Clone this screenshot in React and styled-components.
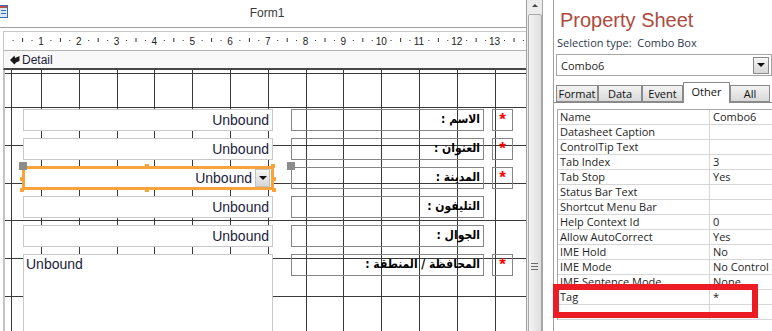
import React from "react";
import styled, { createGlobalStyle } from "styled-components";

const GlobalStyle = createGlobalStyle`
  html, body { margin: 0; padding: 0; background: #fff; }
  body { font-family: "Liberation Sans", Arial, sans-serif; }
  * { box-sizing: border-box; }
`;

const Screen = styled.div`
  position: relative;
  display: flex;
  width: 772px;
  height: 331px;
  overflow: hidden;
  background: #fff;
`;

/* ---------- form designer ---------- */

const DesignPane = styled.div`
  flex: none;
  width: 527px;
  display: flex;
  flex-direction: column;
  border-right: 1px solid #a0a0a0;
`;

const TitleBar = styled.div`
  flex: none;
  height: 28px;
  display: flex;
  align-items: flex-start;
  border-bottom: 1px solid #a0a0a0;
  overflow: hidden;
`;

const TitleIcon = styled.svg`
  flex: none;
  margin: 5px 0 0 -7px;
`;

const TitleText = styled.div`
  flex: 1;
  text-align: center;
  font-size: 12px;
  line-height: 27px;
  color: #3a3a3a;
`;

const RulerBox = styled.div`
  flex: none;
  height: 20px;
  margin: 3px 0 0 3px;
  border-top: 1px solid #c8c8c8;
  border-bottom: 1px solid #b4b4b4;
  border-left: 1px solid #c8c8c8;
  overflow: hidden;
`;

const SectionBar = styled.div`
  flex: none;
  height: 19px;
  margin-left: 3px;
  padding-left: 6px;
  display: flex;
  align-items: center;
  gap: 2px;
  background: #f8f8f8;
  border-left: 1px solid #c8c8c8;
  border-bottom: 2px solid #474747;
  font-size: 12px;
  color: #1e1e3c;
`;

const Canvas = styled.div`
  flex: 1;
  margin-left: 3px;
  padding: 39px 0 0 18px;
  display: flex;
  flex-direction: column;
  gap: 7px;
  border-left: 2px solid #c4c4c4;
  background-image:
    repeating-linear-gradient(to right, #3a3a3a 0 1px, transparent 1px 37.8px),
    repeating-linear-gradient(to bottom, #3a3a3a 0 1px, transparent 1px 37.8px);
  background-position: 36px 0, 0 37px;
`;

const Row = styled.div`
  display: flex;
  align-items: flex-start;
  height: 22px;
`;

const TextBox = styled.div`
  position: relative;
  flex: none;
  width: 250px;
  height: ${(p) => (p.$memo ? "120px" : "22px")};
  display: flex;
  align-items: ${(p) => (p.$memo ? "flex-start" : "center")};
  justify-content: ${(p) => (p.$memo ? "flex-start" : "flex-end")};
  padding: ${(p) => (p.$memo ? "1px 0 0 2px" : "0 3px 0 0")};
  background: #fff;
  border: 1px solid #c8c8c8;
  font-size: 14px;
  color: #1c1c3c;
  ${(p) =>
    p.$selected &&
    `
    padding-right: 2px;
    outline: 3px solid #f8a33c;
    outline-offset: -2px;
  `}
`;

const DropButton = styled.div`
  flex: none;
  width: 15px;
  height: 18px;
  margin-left: 3px;
  display: flex;
  align-items: center;
  justify-content: center;
  background: linear-gradient(#f6f6f6, #d6d6d6);
  border: 1px solid #c2c2c2;
`;

const Arrow = styled.span`
  width: 0;
  height: 0;
  border-left: 4px solid transparent;
  border-right: 4px solid transparent;
  border-top: 4px solid #111;
`;

const Handle = styled.span`
  position: absolute;
  left: ${(p) => p.$x}px;
  top: ${(p) => p.$y}px;
  width: ${(p) => (p.$move ? 8 : 4)}px;
  height: ${(p) => (p.$move ? 8 : 4)}px;
  background: ${(p) => (p.$move ? "#8c8c8c" : "#f8a33c")};
`;

const LabelBox = styled.div`
  position: relative;
  flex: none;
  width: 193px;
  height: 22px;
  margin-left: 18px;
  padding: 1px 3px 0 0;
  border: 1px solid #858585;
  direction: rtl;
  text-align: right;
  font-family: "DejaVu Sans Condensed", "DejaVu Sans", sans-serif;
  font-stretch: condensed;
  font-weight: bold;
  font-size: 12px;
  line-height: 16px;
  color: #000;
  white-space: nowrap;
`;

const StarBox = styled.div`
  flex: none;
  width: 21px;
  height: 22px;
  margin-left: 8px;
  display: flex;
  justify-content: center;
  padding-top: 2px;
  border: 1px solid #858585;
  font-weight: bold;
  font-size: 17px;
  line-height: 16px;
  color: #ff0000;
`;

/* ---------- scrollbar ---------- */

const ScrollBar = styled.div`
  flex: none;
  width: 16px;
  display: flex;
  flex-direction: column;
  align-items: center;
  background: #ececec;
  border-right: 1px solid #a6a6a6;
`;

const ScrollArrow = styled.span`
  margin-top: 4px;
  width: 0;
  height: 0;
  border-left: 3px solid transparent;
  border-right: 3px solid transparent;
  border-bottom: 3px solid #444;
`;

const Thumb = styled.div`
  flex: none;
  width: 14px;
  height: 500px;
  margin-top: 7px;
  padding-top: 248px;
  display: flex;
  flex-direction: column;
  align-items: center;
  gap: 2px;
  background: linear-gradient(to right, #f4f4f4, #dedede);
  border: 1px solid #a8a8a8;
  border-radius: 2px;
`;

const Grip = styled.span`
  width: 7px;
  height: 1px;
  background: #6a6a6a;
`;

/* ---------- property sheet ---------- */

const PropPane = styled.div`
  flex: 1;
  margin-left: 10px;
  display: flex;
  flex-direction: column;
  border-left: 1px solid #a0a0a0;
  font-family: "Open Sans", "Liberation Sans", sans-serif;
  color: #1e1e1e;
  min-width: 0;
`;

const SheetTitle = styled.div`
  padding: 7px 0 0 6px;
  font-family: "Liberation Sans", Arial, sans-serif;
  font-size: 20px;
  line-height: 26px;
  color: #ae4a3c;
  white-space: nowrap;
`;

const SelectionType = styled.div`
  margin-top: 2px;
  padding-left: 3px;
  font-size: 11px;
  line-height: 15px;
  color: #2c3a50;
  white-space: pre;
`;

const ObjectCombo = styled.div`
  margin: 4px 0 0 2px;
  width: 216px;
  height: 22px;
  display: flex;
  align-items: center;
  justify-content: space-between;
  padding: 0 2px 0 4px;
  border: 1px solid #a5a5a5;
  font-size: 11px;
`;

const SmallDrop = styled(DropButton)`
  width: 16px;
  height: 17px;
  border-color: #8a8a8a;
`;

const Tabs = styled.div`
  margin: 5px 0 0 2px;
  height: 21px;
  display: flex;
  align-items: flex-end;
`;

const Tab = styled.div`
  flex: none;
  width: ${(p) => p.$w}px;
  height: ${(p) => (p.$active ? 21 : 17)}px;
  display: flex;
  align-items: ${(p) => (p.$active ? "flex-start" : "center")};
  justify-content: center;
  padding-top: ${(p) => (p.$active ? "1px" : "0")};
  margin-bottom: ${(p) => (p.$active ? "-1px" : "0")};
  position: relative;
  z-index: ${(p) => (p.$active ? 1 : 0)};
  background: ${(p) => (p.$active ? "#fff" : "linear-gradient(#f3f3f3, #d9d9d9)")};
  border: 1px solid #8a8a8a;
  border-bottom: ${(p) => (p.$active ? "none" : "1px solid #8a8a8a")};
  font-size: 11px;
  line-height: 15px;
  color: #111;
`;

const TabPage = styled.div`
  flex: 1;
  padding: 6px 0 0 3px;
  border-top: 1px solid #8a8a8a;
`;

const Grid = styled.div`
  border-top: 1px solid #a6a6a6;
  border-left: 1px solid #a6a6a6;
`;

const PropRow = styled.div`
  display: grid;
  grid-template-columns: 152px 1fr;
  height: 15px;
  border-bottom: 1px solid #d6d6d6;
  font-size: 11px;
  line-height: 14px;
  white-space: nowrap;
`;

const PropName = styled.div`
  padding-left: 2px;
  border-right: 1px solid #d6d6d6;
  overflow: hidden;
`;

const PropValue = styled.div`
  padding-left: 3px;
  overflow: hidden;
`;

const Highlight = styled.div`
  position: absolute;
  left: 553px;
  top: 284px;
  width: 205px;
  height: 34px;
  border: 6px solid #ed1c24;
  pointer-events: none;
`;

/* ---------- data ---------- */

const formRows = [
  { label: "الاسم :", star: true },
  { label: "العنوان :", star: true },
  { label: "المدينة :", star: true, combo: true },
  { label: "التليفون :" },
  { label: "الجوال  :" },
  { label: "المحافظة / المنطقة :", star: true, memo: true },
];

const props = [
  ["Name", "Combo6"],
  ["Datasheet Caption", ""],
  ["ControlTip Text", ""],
  ["Tab Index", "3"],
  ["Tab Stop", "Yes"],
  ["Status Bar Text", ""],
  ["Shortcut Menu Bar", ""],
  ["Help Context Id", "0"],
  ["Allow AutoCorrect", "Yes"],
  ["IME Hold", "No"],
  ["IME Mode", "No Control"],
  ["IME Sentence Mode", "None"],
  ["Tag", "*"],
  ["", ""],
];

const tabs = [
  ["Format", 42],
  ["Data", 44],
  ["Event", 41],
  ["Other", 47, true],
  ["All", 40],
];

const selHandles = [
  [121, -4], [247, -4], [-4, 9], [248, 9], [-4, 20], [121, 20], [248, 20],
];

const Ruler = () => {
  const cm = 37.8;
  const marks = [];
  for (let k = 0; k < 14; k++) {
    const x0 = cm * k - 0.8;
    marks.push(<rect key={"a" + k} x={x0 + 9.4} y={8} width={1} height={1} fill="#333" />);
    marks.push(<rect key={"b" + k} x={x0 + 18.9} y={6} width={1} height={4} fill="#333" />);
    marks.push(<rect key={"c" + k} x={x0 + 28.3} y={8} width={1} height={1} fill="#333" />);
    if (k < 13) {
      marks.push(
        <text key={"n" + k} x={x0 + cm} y={12.5} fontSize="10" fill="#222" textAnchor="middle"
          fontFamily="Liberation Sans, Arial, sans-serif">
          {k + 1}
        </text>
      );
    }
  }
  return (
    <svg width="524" height="18">
      {marks}
    </svg>
  );
};

const App = () => {
  return (
    <Screen>
      <GlobalStyle />
      <DesignPane>
        <TitleBar>
          <TitleIcon width="15" height="13" viewBox="0 0 15 13">
            <rect x="0.5" y="0.5" width="14" height="12" fill="#dbe8f6" stroke="#3c6fb0" />
            <rect x="1" y="1" width="13" height="2" fill="#c0504d" />
            <rect x="8" y="5" width="5" height="1" fill="#3c6fb0" />
            <rect x="8" y="8" width="5" height="1" fill="#3c6fb0" />
          </TitleIcon>
          <TitleText>Form1</TitleText>
        </TitleBar>
        <RulerBox>
          <Ruler />
        </RulerBox>
        <SectionBar>
          <svg width="10" height="10" viewBox="0 0 10 10">
            <path d="M0 5 L4.5 0.5 L5 3 L9.5 1 L9.5 6 L6 7.5 L4.5 9.5 Z" fill="#1a1a1a" />
          </svg>
          Detail
        </SectionBar>
        <Canvas>
          {formRows.map((r, i) => (
            <Row key={i}>
              {r.combo ? (
                <TextBox $selected>
                  Unbound
                  <DropButton>
                    <Arrow />
                  </DropButton>
                  <Handle $move $x={-5} $y={-6} />
                  {selHandles.map(([x, y], j) => (
                    <Handle key={j} $x={x} $y={y} />
                  ))}
                </TextBox>
              ) : (
                <TextBox $memo={r.memo}>Unbound</TextBox>
              )}
              <LabelBox>
                {r.label}
                {r.combo && <Handle $move $x={-5} $y={-6} />}
              </LabelBox>
              {r.star && <StarBox>*</StarBox>}
            </Row>
          ))}
        </Canvas>
      </DesignPane>

      <ScrollBar>
        <ScrollArrow />
        <Thumb>
          <Grip />
          <Grip />
          <Grip />
        </Thumb>
      </ScrollBar>

      <PropPane>
        <SheetTitle>Property Sheet</SheetTitle>
        <SelectionType>Selection type:  Combo Box</SelectionType>
        <ObjectCombo>
          Combo6
          <SmallDrop>
            <Arrow />
          </SmallDrop>
        </ObjectCombo>
        <Tabs>
          {tabs.map(([t, w, active]) => (
            <Tab key={t} $w={w} $active={active}>
              {t}
            </Tab>
          ))}
        </Tabs>
        <TabPage>
          <Grid>
            {props.map(([n, v], i) => (
              <PropRow key={i}>
                <PropName>{n}</PropName>
                <PropValue>{v}</PropValue>
              </PropRow>
            ))}
          </Grid>
        </TabPage>
      </PropPane>

      <Highlight />
    </Screen>
  );
};

export default App;
